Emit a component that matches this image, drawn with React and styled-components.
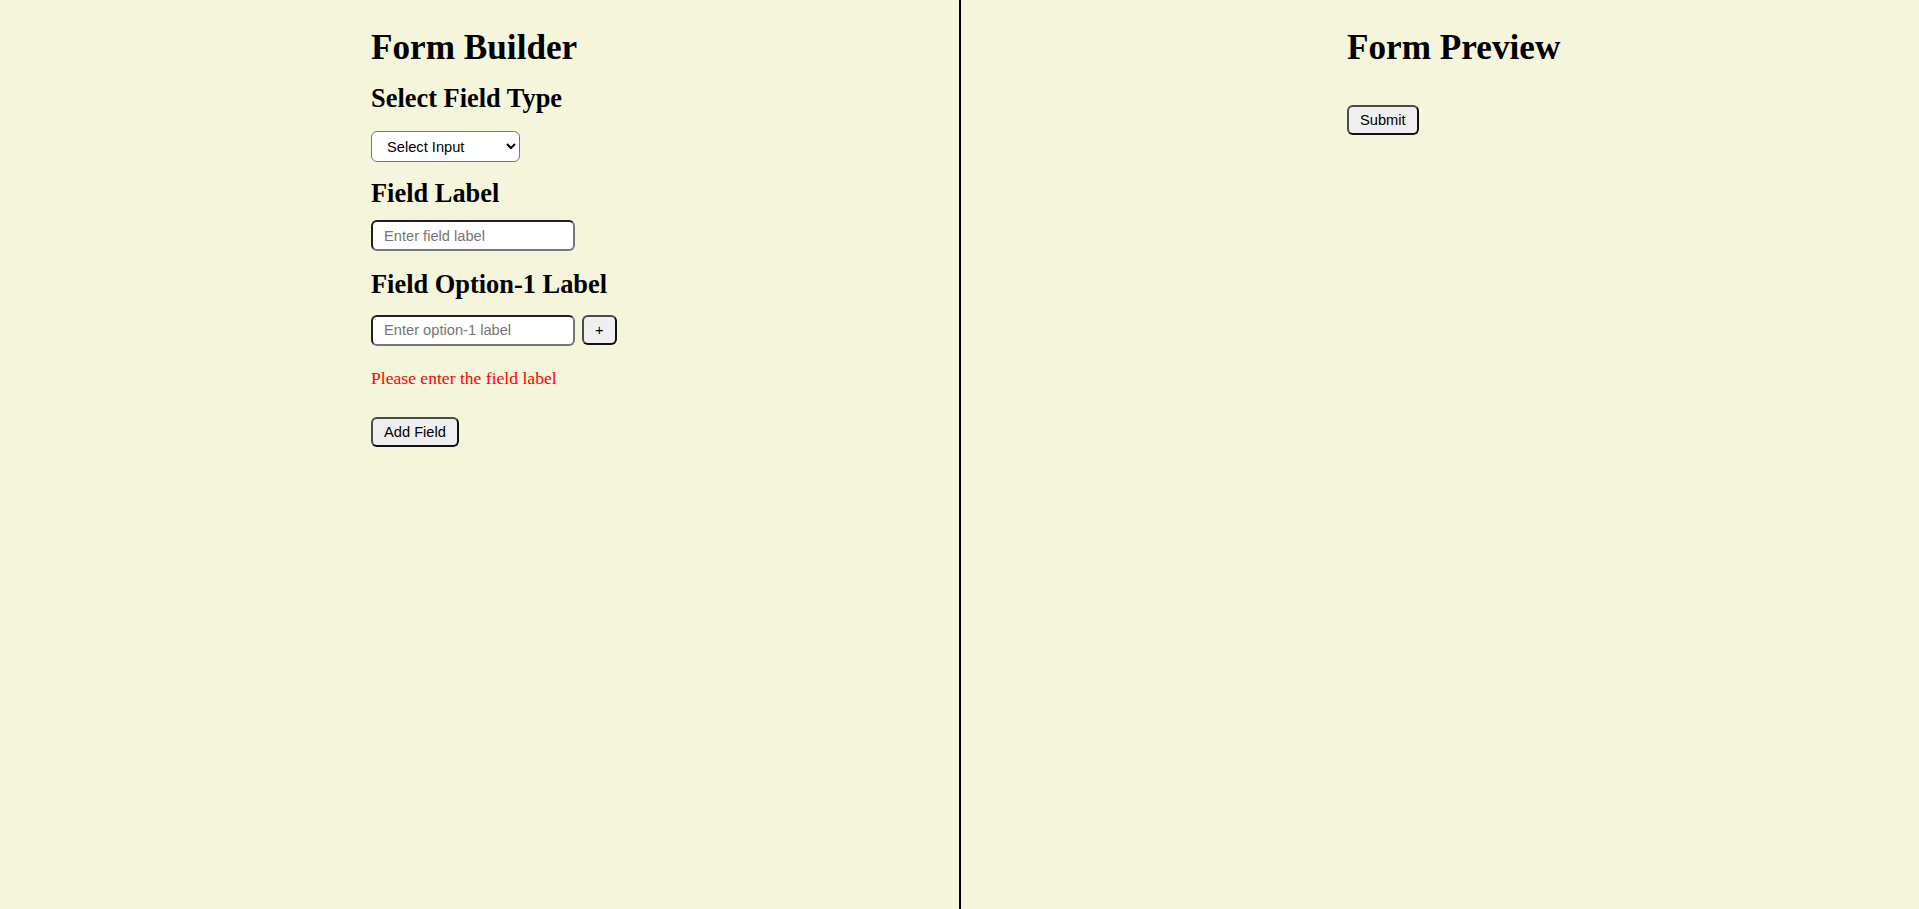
import React, { useState } from "react";
import styled, { createGlobalStyle } from "styled-components";

const GlobalStyle = createGlobalStyle`
	html, body {
		margin: 0;
		padding: 0;
		background: #f5f5dc;
		font-family: "Liberation Serif", "Times New Roman", serif;
	}

	* {
		box-sizing: border-box;
	}
`;

const Page = styled.div`
	display: flex;
	min-height: 100vh;
	background: #f5f5dc;
`;

const Panel = styled.section`
	flex: ${props => (props.divider ? "0 0 961px" : "1")};
	border-right: ${props => (props.divider ? "2px solid #000" : "none")};
	padding: 28px 0 0 ${props => props.inset}px;
	display: flex;
	flex-direction: column;
	align-items: flex-start;
`;

const Title = styled.h1`
	margin: 0;
	font-size: 35.2px;
	font-weight: bold;
	line-height: 39px;
	color: #000;
`;

const Heading = styled.h2`
	margin: ${props => props.top}px 0 0;
	font-size: 26.4px;
	font-weight: bold;
	line-height: 29.2px;
	color: #000;
`;

const Select = styled.select`
	margin-top: ${props => props.top}px;
	width: 149px;
	height: 31px;
	padding: 0 6px 0 11px;
	font-family: "Liberation Sans", Arial, sans-serif;
	font-size: 14.67px;
	color: #000;
	background: #fff;
	border: 1px solid #767676;
	border-radius: 6px;
`;

const Row = styled.div`
	display: flex;
	align-items: center;
	gap: 7px;
	margin-top: ${props => props.top}px;
`;

const TextInput = styled.input`
	width: 204px;
	height: 31px;
	padding: 0 11px;
	font-family: "Liberation Sans", Arial, sans-serif;
	font-size: 14.67px;
	color: #000;
	background: #fff;
	border: 2px solid;
	border-color: #1e1e1e #767676 #767676 #1e1e1e;
	border-radius: 6px;
	outline: none;

	&::placeholder {
		color: #757575;
	}
`;

const Button = styled.button`
	margin-top: ${props => props.top || 0}px;
	height: 30px;
	padding: 0 11px;
	font-family: "Liberation Sans", Arial, sans-serif;
	font-size: 14.67px;
	color: #000;
	background: #efefef;
	border: 2px solid;
	border-color: #4a4a4a #111 #111 #4a4a4a;
	border-radius: 6px;
	cursor: pointer;
`;

const ErrorText = styled.p`
	margin: 23px 0 0;
	font-size: 17.6px;
	line-height: 19.5px;
	color: #ff0000;
`;

const FormBuilder = () => {
	const [type, setType] = useState("");

	return (
		<Panel divider inset={371}>
			<Title>Form Builder</Title>

			<Heading top={17}>Select Field Type</Heading>
			<Select top={18} value={type} onChange={e => setType(e.target.value)}>
				<option value="">Select Input</option>
				<option value="text">Text</option>
				<option value="checkbox">Checkbox</option>
				<option value="radio">Radio</option>
			</Select>

			<Heading top={17}>Field Label</Heading>
			<Row top={12}>
				<TextInput type="text" placeholder="Enter field label" />
			</Row>

			<Heading top={19}>Field Option-1 Label</Heading>
			<Row top={15}>
				<TextInput type="text" placeholder="Enter option-1 label" />
				<Button>+</Button>
			</Row>

			<ErrorText>Please enter the field label</ErrorText>

			<Button top={29}>Add Field</Button>
		</Panel>
	);
};

const FormPreview = () => (
	<Panel inset={386}>
		<Title>Form Preview</Title>
		<Button top={38}>Submit</Button>
	</Panel>
);

const App = () => (
	<>
		<GlobalStyle />
		<Page>
			<FormBuilder />
			<FormPreview />
		</Page>
	</>
);

export default App;
